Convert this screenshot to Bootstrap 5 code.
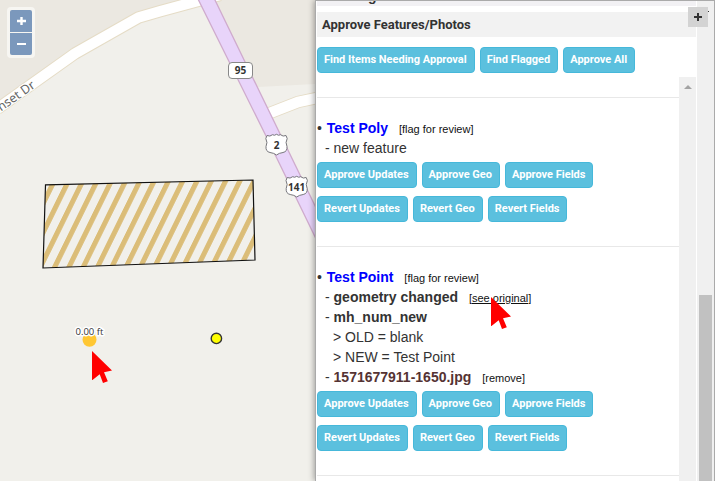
<!DOCTYPE html>
<html lang="en">
<head>
<meta charset="utf-8">
<meta name="viewport" content="width=device-width, initial-scale=1">
<title>Approve Features/Photos</title>
<link href="https://cdn.jsdelivr.net/npm/bootstrap@5.3.0/dist/css/bootstrap.min.css" rel="stylesheet">
<style>
body { font-family: "Liberation Sans", Arial, sans-serif; font-size: 14px; line-height: 20px; color: #333; }
.map-pane { background: #f1f0eb; min-width: 0; }
.map-art { position: absolute; top: 0; left: 0; }
.zoom-box { position: absolute; top: 7px; left: 7px; padding: 3px; background: #f7f6f2; border-radius: 4px; gap: 1px; }
.zoom-box button { width: 22px; height: 22px; border: 0; padding: 0; background: #7b98bc; color: #fff; }
.zoom-box button:first-child { border-radius: 2px 2px 0 0; }
.zoom-box button:last-child { border-radius: 0 0 2px 2px; }
.side-pane { flex: 0 1 400px; background: #fff; border: 1px solid #aaa; border-bottom: 0; padding-left: 1px; box-shadow: -1px 0 6px rgba(0,0,0,.35); }
.clipped-head { height: 5px; background: #f2f1f4; padding-left: 51px; overflow: hidden; font-weight: bold; line-height: 5px; }
.clipped-head span { display: block; margin-top: -10px; line-height: 10px; }
.pane-title { font-family: Roboto, sans-serif; font-size: 13px; font-weight: 700; line-height: 25px; background: #f2f2f2; margin: 6px 0 10px; padding-left: 5px; }
.btn-act { --bs-btn-color: #fff; --bs-btn-bg: #5bc0de; --bs-btn-border-color: #46b8da; --bs-btn-hover-color: #fff; --bs-btn-hover-bg: #31b0d5; --bs-btn-font-family: Roboto, sans-serif;
  --bs-btn-font-size: 11px; --bs-btn-font-weight: 700; --bs-btn-padding-x: 6px; --bs-btn-padding-y: 4px; --bs-btn-line-height: 16px; --bs-btn-border-radius: 4px; }
.act-row { gap: 5px; margin: 4px 0 8px; white-space: nowrap; }
.act-row .btn-act { --bs-btn-padding-x: 7px; padding-left: 6px; }
.act-row + .act-row { margin-bottom: 4px; }
.act-top { margin: 0 0 4px; }
.review-item { border-top: 1px solid #e8e8e8; padding: 20px 0; white-space: nowrap; }
.items { padding-top: 20px; min-width: 0; }
.item-name { color: #00f; font-weight: bold; text-decoration: none; margin-left: 1px; }
.photo-name { color: #533; font-weight: bold; text-decoration: none; }
.aux { color: #111; font-size: 11px; line-height: 1; text-decoration: none; margin-left: 7px; }
.sub { padding-left: 8px; }
.sub2 { padding-left: 16px; }
.bar { width: 17px; background: #f0f0f0; flex: none; }
.bar-outer { margin-left: 1px; padding: 294px 2px 0; }
.thumb { background: #c1c1c1; }
.add-btn { position: absolute; top: 6px; right: 6px; width: 20px; height: 20px; border: 0; padding: 0; background: #d3d3d3; color: #333; }
.add-btn::after { content: ""; position: absolute; top: 4px; right: -1px; width: 1px; height: 1px; background: #333; }
.pointer { position: absolute; left: 22px; top: 5px; }
</style>
<script src="https://cdn.jsdelivr.net/npm/bootstrap@5.3.0/dist/js/bootstrap.bundle.min.js"></script>
</head>
<body>
<div class="d-flex vh-100 overflow-hidden">
  <main class="map-pane flex-grow-1 position-relative overflow-hidden">
    <svg class="map-art" width="316" height="481" role="img" aria-label="Map">
      <defs>
        <pattern id="hatch" width="14.28" height="400" patternUnits="userSpaceOnUse" patternTransform="translate(63.7 185) skewX(-26.2)">
          <rect width="5.6" height="400" fill="#dbbd78"/>
        </pattern>
        <path id="shield" d="M-9.5-9 Q-6.500-7.500-4-9.800 Q-2-8.500 0-10.200 Q2-8.500 4-9.800 Q6.500-7.500 9.500-9 L10.700-6 Q8.500-2 10.500 2 Q11 7 6.500 8 Q2.500 8.500 0 10.500 Q-2.500 8.500-6.500 8 Q-11 7-10.500 2 Q-8.500-2-10.700-6Z" fill="#fff" stroke="#77777c" stroke-width="1"/>
      </defs>
      <path d="M0 0H200L138 17 75 53 0 107ZM198 0H316V84L258 87Z" fill="#ebe8e1"/>
      <g fill="none" stroke-linejoin="round">
        <path d="M-3 109L75 53.500 138.500 17.500 160 11.300 220-5M266 114.500L298 102 317 98" stroke="#e5dcc6" stroke-width="12.500"/>
        <path d="M-3 109L75 53.500 138.500 17.500 160 11.300 220-5M266 114.500L298 102 317 98" stroke="#fff" stroke-width="10.500"/>
      </g>
      <path d="M197.500-2L267 138 318 243V212L214-2Z" fill="#e8d4fa" stroke="#cfabcd" stroke-width="1.300"/>
      <g font-family="'Noto Sans', sans-serif">
        <text x="36" y="87" font-size="12.500" fill="#666" stroke="#fff" stroke-width="2" paint-order="stroke" text-anchor="end" transform="rotate(-35 36 87)">Sunset Dr</text>
        <g font-size="10" font-weight="bold" fill="#333" text-anchor="middle">
          <rect x="228.500" y="62.500" width="24" height="16" rx="3.500" fill="#fff" stroke="#888"/>
          <text x="240.500" y="74.300">95</text>
          <use href="#shield" x="276.500" y="144.500"/><text x="276.500" y="149.300">2</text>
          <use href="#shield" x="296.700" y="186.500"/><text x="296.700" y="191.300">141</text>
        </g>
        <path d="M45.500 184.800L253 180 255 260 43 268Z" fill="url(#hatch)" stroke="#111" stroke-width="1.200"/>
        <circle cx="89.500" cy="339.700" r="7" fill="#ffc733"/>
        <text x="75.500" y="335" font-size="9.500" fill="#333" stroke="#fff" stroke-width="3" stroke-linejoin="round" paint-order="stroke" font-family="'Open Sans', sans-serif">0.00 ft</text>
      </g>
      <circle cx="216.400" cy="338.400" r="5.200" fill="#ff0" stroke="#333" stroke-width="1.400"/>
      <path d="M92 351L112 370.500 104 372.300 107.800 381.300 103 383 99.700 374.300 92.500 380H92Z" fill="#f00"/>
    </svg>
    <div class="zoom-box d-flex flex-column">
      <button type="button" class="d-flex align-items-center justify-content-center" aria-label="Zoom in"><svg width="10" height="10"><path d="M1 5H10M5.500 1V9" stroke="#fff" stroke-width="2.400"/></svg></button>
      <button type="button" class="d-flex align-items-center justify-content-center" aria-label="Zoom out"><svg width="10" height="10"><path d="M1 5H10" stroke="#fff" stroke-width="2"/></svg></button>
    </div>
  </main>

  <aside class="side-pane d-flex position-relative">
    <div class="d-flex flex-column flex-grow-1 overflow-hidden">
      <div class="clipped-head"><span>g</span></div>
      <h1 class="pane-title">Approve Features/Photos</h1>
      <div class="act-row act-top d-flex">
        <button type="button" class="btn btn-act">Find Items Needing Approval</button>
        <button type="button" class="btn btn-act">Find Flagged</button>
        <button type="button" class="btn btn-act">Approve All</button>
      </div>
      <div class="d-flex flex-grow-1 overflow-hidden">
        <div class="items flex-grow-1 overflow-hidden">
          <section class="review-item">
            <div>• <a class="item-name" href="#">Test Poly</a> <a class="aux" href="#">[flag for review]</a></div>
            <div class="sub">- new feature</div>
            <div class="act-row d-flex">
              <button type="button" class="btn btn-act">Approve Updates</button>
              <button type="button" class="btn btn-act">Approve Geo</button>
              <button type="button" class="btn btn-act">Approve Fields</button>
            </div>
            <div class="act-row d-flex">
              <button type="button" class="btn btn-act">Revert Updates</button>
              <button type="button" class="btn btn-act">Revert Geo</button>
              <button type="button" class="btn btn-act">Revert Fields</button>
            </div>
          </section>
          <section class="review-item">
            <div>• <a class="item-name" href="#">Test Point</a> <a class="aux" href="#">[flag for review]</a></div>
            <div class="sub">- <b>geometry changed</b> <a class="aux position-relative text-decoration-underline" href="#">[see original]<svg class="pointer" width="21" height="33" aria-hidden="true"><path d="M0 0L20 19.500 12 21.300 15.800 30.300 11 32 7.700 23.300 .5 29H0Z" fill="#f00"/></svg></a></div>
            <div class="sub">- <b>mh_num_new</b></div>
            <div class="sub2">&gt; OLD = blank</div>
            <div class="sub2">&gt; NEW = Test Point</div>
            <div class="sub">- <a class="photo-name" href="#">1571677911-1650.jpg</a> <a class="aux" href="#">[remove]</a></div>
            <div class="act-row d-flex">
              <button type="button" class="btn btn-act">Approve Updates</button>
              <button type="button" class="btn btn-act">Approve Geo</button>
              <button type="button" class="btn btn-act">Approve Fields</button>
            </div>
            <div class="act-row d-flex">
              <button type="button" class="btn btn-act">Revert Updates</button>
              <button type="button" class="btn btn-act">Revert Geo</button>
              <button type="button" class="btn btn-act">Revert Fields</button>
            </div>
          </section>
          <section class="review-item"></section>
        </div>
        <div class="bar d-flex justify-content-center pt-2"><svg width="8" height="4" aria-hidden="true"><path d="M0 4L4 0 8 4Z" fill="#a3a3a3"/></svg></div>
      </div>
    </div>
    <div class="bar bar-outer d-flex"><div class="thumb flex-grow-1"></div></div>
    <button type="button" class="add-btn d-flex align-items-center justify-content-center" aria-label="Add"><svg width="10" height="10"><path d="M1 5H9M5 1V9" stroke="#333" stroke-width="2"/></svg></button>
  </aside>
</div>
</body>
</html>
